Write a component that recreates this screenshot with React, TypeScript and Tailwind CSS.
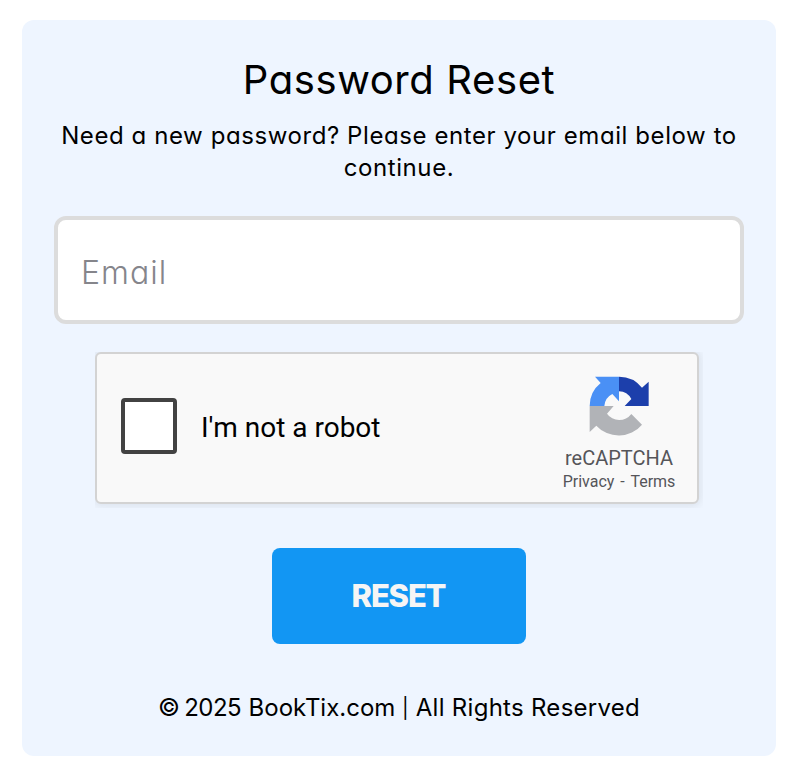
function RecaptchaLogo() {
  return (
    <svg viewBox="57 48 180 183" className="h-[61px] w-[60px]" aria-hidden="true">
      <path fill="#4a90f5" d="M75 50H147V124L127 102A44 44 0 0 0 103 138H59A88 88 0 0 1 92 69Z" />
      <path fill="#1c3fab" d="M147 50A88 88 0 0 1 216 83L236 65V138H164L184 117A44 44 0 0 0 147 94Z" />
      <path fill="#b1b3b7" d="M59 138H131L111 161A45 45 0 0 0 184 162L216 194A91 91 0 0 1 79 197L59 216Z" />
    </svg>
  );
}

export default function App() {
  return (
    <div className="h-[772px] bg-white pt-5 pl-[22px] font-['Inter',sans-serif] text-black [font-feature-settings:'cv11'_1]">
      <main className="flex h-[736px] w-[754px] flex-col items-center rounded-xl bg-[#eef5ff] px-8">
        <h1 className="mt-[30px] text-[40px] leading-[60px] tracking-[0.6px] whitespace-nowrap">Password Reset</h1>
        <p className="mt-[10px] text-center text-[24px] leading-8 tracking-[0.58px]">
          <span className="block whitespace-nowrap">Need a new password? Please enter your email below to</span>
          <span className="block">continue.</span>
        </p>
        <input
          type="email"
          placeholder="Email"
          className="mt-8 h-[108px] w-[690px] shrink-0 rounded-xl border-4 border-[#dcdcdc] bg-white pt-1 pr-6 pl-[23px] text-[32px] font-light tracking-[1px] placeholder:text-[#85858b]"
        />
        <section className="mt-7 ml-[41px] flex h-[152px] w-[604px] shrink-0 items-center self-start rounded-md border-2 border-[#d3d3d3] bg-[#f9f9f9] font-['Roboto',sans-serif] shadow-[0_0_8px_2px_rgba(0,0,0,0.08)] [clip-path:inset(0_-4px_-4px_0)]">
          <span className="-mt-1 ml-6 h-14 w-14 rounded border-4 border-[#424242] bg-white" />
          <span className="ml-6 text-[28px] leading-8">I&apos;m not a robot</span>
          <div className="mr-[21px] ml-auto flex h-full w-[114px] flex-col items-center pt-[22px] text-[#555559]">
            <RecaptchaLogo />
            <span className="mt-[9px] text-[20px] leading-6">reCAPTCHA</span>
            <span className="text-[16px] leading-6 [word-spacing:2px] whitespace-nowrap">Privacy - Terms</span>
          </div>
        </section>
        <button className="mt-11 h-24 w-[254px] shrink-0 rounded-lg bg-[#1296f3] pr-px text-[31px] font-extrabold tracking-[-1.2px] text-[#f5f5f5]">
          RESET
        </button>
        <footer className="mt-[46px] text-[24px] leading-9 whitespace-pre">
          <span className="tracking-[-1.2px]">© </span>
          <span className="tracking-[-0.5px]">2025</span>
          <span className="tracking-[0.6px]"> </span>
          <span>BookTix.com </span>
          <span className="inline-block align-[1px] text-[20px] leading-5">|</span>
          <span className="tracking-[0.28px]"> All Rights Reserved</span>
        </footer>
      </main>
    </div>
  );
}
